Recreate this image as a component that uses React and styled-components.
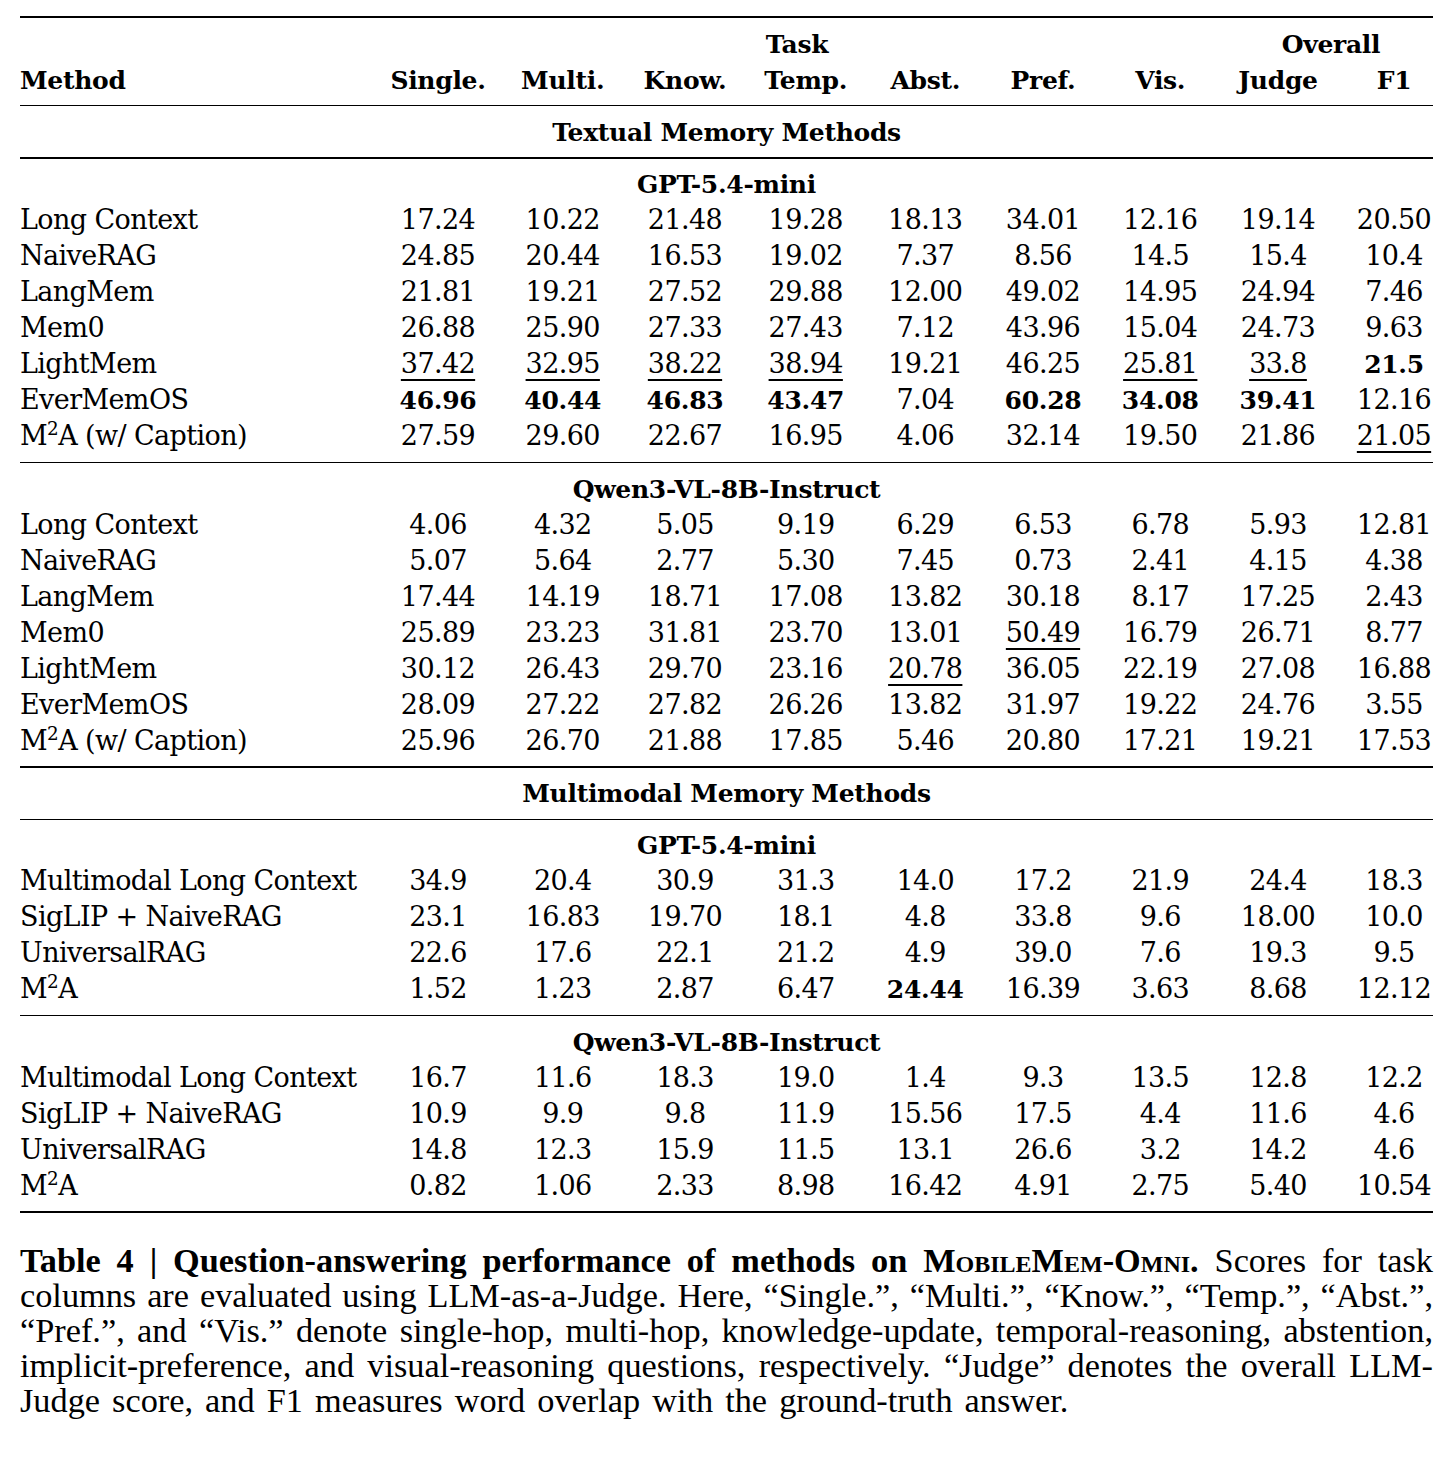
import styled, { createGlobalStyle } from "styled-components";

const GlobalStyle = createGlobalStyle`
  html, body {
    margin: 0;
    padding: 0;
    background: #ffffff;
  }
  body {
    color: #000000;
  }
`;

// column widths follow the LaTeX table (method + 9 centred score columns)
const COLS =
  "355px 126px 123.5px 121px 120.5px 118.5px 117px 117.5px 118px 96px";

const HEAD = ["Single.", "Multi.", "Know.", "Temp.", "Abst.", "Pref.", "Vis.", "Judge", "F1"];

// "b" prefix = bold best, "u" prefix = underlined second best
const sections = [
  {
    title: "Textual Memory Methods",
    groups: [
      {
        model: "GPT-5.4-mini",
        rows: [
          ["Long Context", "17.24 10.22 21.48 19.28 18.13 34.01 12.16 19.14 20.50"],
          ["NaiveRAG", "24.85 20.44 16.53 19.02 7.37 8.56 14.5 15.4 10.4"],
          ["LangMem", "21.81 19.21 27.52 29.88 12.00 49.02 14.95 24.94 7.46"],
          ["Mem0", "26.88 25.90 27.33 27.43 7.12 43.96 15.04 24.73 9.63"],
          ["LightMem", "u37.42 u32.95 u38.22 u38.94 19.21 46.25 u25.81 u33.8 b21.5"],
          ["EverMemOS", "b46.96 b40.44 b46.83 b43.47 7.04 b60.28 b34.08 b39.41 12.16"],
          ["M2A (w/ Caption)", "27.59 29.60 22.67 16.95 4.06 32.14 19.50 21.86 u21.05"],
        ],
      },
      {
        model: "Qwen3-VL-8B-Instruct",
        rows: [
          ["Long Context", "4.06 4.32 5.05 9.19 6.29 6.53 6.78 5.93 12.81"],
          ["NaiveRAG", "5.07 5.64 2.77 5.30 7.45 0.73 2.41 4.15 4.38"],
          ["LangMem", "17.44 14.19 18.71 17.08 13.82 30.18 8.17 17.25 2.43"],
          ["Mem0", "25.89 23.23 31.81 23.70 13.01 u50.49 16.79 26.71 8.77"],
          ["LightMem", "30.12 26.43 29.70 23.16 u20.78 36.05 22.19 27.08 16.88"],
          ["EverMemOS", "28.09 27.22 27.82 26.26 13.82 31.97 19.22 24.76 3.55"],
          ["M2A (w/ Caption)", "25.96 26.70 21.88 17.85 5.46 20.80 17.21 19.21 17.53"],
        ],
      },
    ],
  },
  {
    title: "Multimodal Memory Methods",
    groups: [
      {
        model: "GPT-5.4-mini",
        rows: [
          ["Multimodal Long Context", "34.9 20.4 30.9 31.3 14.0 17.2 21.9 24.4 18.3"],
          ["SigLIP + NaiveRAG", "23.1 16.83 19.70 18.1 4.8 33.8 9.6 18.00 10.0"],
          ["UniversalRAG", "22.6 17.6 22.1 21.2 4.9 39.0 7.6 19.3 9.5"],
          ["M2A", "1.52 1.23 2.87 6.47 b24.44 16.39 3.63 8.68 12.12"],
        ],
      },
      {
        model: "Qwen3-VL-8B-Instruct",
        rows: [
          ["Multimodal Long Context", "16.7 11.6 18.3 19.0 1.4 9.3 13.5 12.8 12.2"],
          ["SigLIP + NaiveRAG", "10.9 9.9 9.8 11.9 15.56 17.5 4.4 11.6 4.6"],
          ["UniversalRAG", "14.8 12.3 15.9 11.5 13.1 26.6 3.2 14.2 4.6"],
          ["M2A", "0.82 1.06 2.33 8.98 16.42 4.91 2.75 5.40 10.54"],
        ],
      },
    ],
  },
];

function MethodName({ name }) {
  if (name.startsWith("M2A")) {
    return (
      <>
        M<Sup>2</Sup>A{name.slice(3)}
      </>
    );
  }
  return name;
}

function Score({ raw }) {
  const flag = raw[0];
  if (flag === "b") return <Cell $bold>{raw.slice(1)}</Cell>;
  if (flag === "u") return <Cell><Under>{raw.slice(1)}</Under></Cell>;
  return <Cell>{raw}</Cell>;
}

export default function App() {
  return (
    <Page>
      <GlobalStyle />
      <Table>
        <Rule $heavy />
        <Row>
          <span />
          <GroupHead $from={2} $to={9}>Task</GroupHead>
          <GroupHead $from={9} $to={11} $shift>Overall</GroupHead>
        </Row>
        <Row>
          <MethodHead>Method</MethodHead>
          {HEAD.map((h) => (
            <Cell key={h} $bold>{h}</Cell>
          ))}
        </Row>
        {sections.map((sec) => (
          <Section key={sec.title}>
            <Rule />
            <Banner>{sec.title}</Banner>
            {sec.groups.map((g, gi) => (
              <Section key={g.model + gi}>
                <Rule />
                <Banner>{g.model}</Banner>
                {g.rows.map(([name, vals]) => (
                  <Row key={name}>
                    <Method>
                      <MethodName name={name} />
                    </Method>
                    {vals.split(" ").map((v, i) => (
                      <Score key={i} raw={v} />
                    ))}
                  </Row>
                ))}
              </Section>
            ))}
          </Section>
        ))}
        <Rule $heavy />
      </Table>

      <Caption>
        <CapLine>
          <Strong>
            Table 4 | Question-answering performance of methods on{" "}
            <Caps>MobileMem-Omni.</Caps>
          </Strong>{" "}
          Scores for task
        </CapLine>
        <CapLine>
          columns are evaluated using LLM-as-a-Judge. Here, “Single.”, “Multi.”, “Know.”, “Temp.”, “Abst.”,
        </CapLine>
        <CapLine>
          “Pref.”, and “Vis.” denote single-hop, multi-hop, knowledge-update, temporal-reasoning, abstention,
        </CapLine>
        <CapLine>
          implicit-preference, and visual-reasoning questions, respectively. “Judge” denotes the overall LLM-
        </CapLine>
        <CapLine $last>
          Judge score, and F1 measures word overlap with the ground-truth answer.
        </CapLine>
      </Caption>
    </Page>
  );
}

const Page = styled.div`
  width: 1413px;
  padding: 16px 20px 40px;
`;

const Table = styled.div`
  display: flex;
  flex-direction: column;
  font-family: "DejaVu Serif", "Liberation Serif", serif;
  font-size: 27px;
  line-height: 36px;
  letter-spacing: -0.6px;
`;

const Section = styled.div`
  display: contents;
`;

const Rule = styled.div`
  height: ${(p) => (p.$heavy ? "2px" : "1.4px")};
  background: #000;
  margin: ${(p) => (p.$heavy ? "0 0 7.5px" : "7.5px 0")};
  &:last-child {
    margin: 7.5px 0 0;
  }
`;

const Row = styled.div`
  display: grid;
  grid-template-columns: ${COLS};
  height: 36px;
  white-space: nowrap;
`;

const Bold = `
  font-weight: 700;
  font-size: 25px;
  letter-spacing: -0.3px;
  padding-top: 1px;
  height: 35px;
`;

const Cell = styled.div`
  text-align: center;
  ${(p) => (p.$bold ? Bold : "")}
  &:last-child {
    padding-left: 18px;
  }
`;

const GroupHead = styled.div`
  grid-column: ${(p) => `${p.$from} / ${p.$to}`};
  text-align: center;
  ${Bold}
  padding-left: ${(p) => (p.$shift ? "10px" : "0")};
`;

const MethodHead = styled.div`
  ${Bold}
  text-align: left;
`;

const Method = styled.div`
  text-align: left;
`;

const Banner = styled.div`
  text-align: center;
  ${Bold}
`;

const Under = styled.span`
  text-decoration: underline;
  text-decoration-thickness: 1.5px;
  text-underline-offset: 6px;
`;

const Sup = styled.sup`
  font-size: 0.68em;
  line-height: 0;
  vertical-align: 0.55em;
`;

const Caption = styled.div`
  margin-top: 29.5px;
  font-family: "Liberation Serif", "Times New Roman", serif;
  font-size: 34.3px;
  line-height: 35px;
`;

const CapLine = styled.div`
  height: 35px;
  white-space: nowrap;
  text-align: justify;
  text-align-last: ${(p) => (p.$last ? "left" : "justify")};
  word-spacing: ${(p) => (p.$last ? "3.5px" : "0")};
`;

const Strong = styled.span`
  font-weight: 700;
`;

const Caps = styled.span`
  font-variant: small-caps;
`;
